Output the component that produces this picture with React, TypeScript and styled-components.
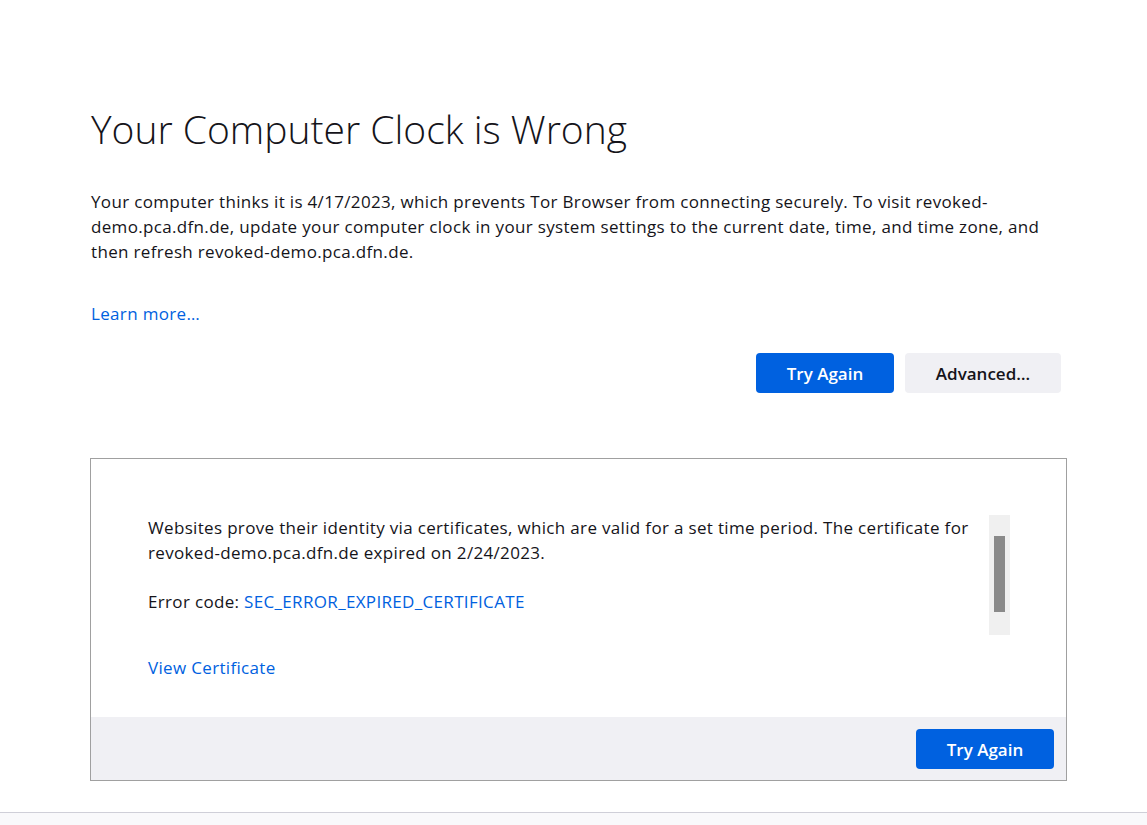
import React, { FC } from 'react';
import styled, { createGlobalStyle } from 'styled-components';

const FONT = '"Open Sans", "Liberation Sans", sans-serif';

const GlobalStyle = createGlobalStyle`
    html, body {
        margin: 0;
        padding: 0;
        background: #ffffff;
    }
    body {
        font-family: ${FONT};
        color: #15141a;
    }
`;

const Page = styled.div`
    height: 825px;
    display: flex;
    flex-direction: column;
    overflow: hidden;
`;

const Main = styled.main`
    flex: 1;
    padding: 104px 0 0 90px;
`;

const Container = styled.div`
    width: 977px;
    display: flex;
    flex-direction: column;
`;

const Intro = styled.div`
    padding: 0 7px 0 1px;
`;

const Title = styled.h1`
    margin: 0;
    font-size: 39px;
    font-weight: 300;
    line-height: 50px;
`;

const Text = styled.p`
    margin: 0;
    font-size: 17px;
    line-height: 25px;
    letter-spacing: 0.33px;
`;

const Lead = styled(Text)`
    margin-top: 35px;
`;

const Link = styled.a`
    color: #0061e0;
    text-decoration: none;
    font-size: 17px;
    line-height: 25px;
    letter-spacing: 0.33px;
`;

const LearnMore = styled.div`
    margin-top: 37px;
`;

const ButtonRow = styled.div<{ $pad?: string }>`
    display: flex;
    justify-content: flex-end;
    gap: 11px;
    padding: ${(p) => p.$pad || '0'};
`;

const Button = styled.button<{ $primary?: boolean; $width: number }>`
    width: ${(p) => p.$width}px;
    height: 40px;
    border: none;
    border-radius: 4px;
    font-family: ${FONT};
    font-size: 17px;
    font-weight: 600;
    background: ${(p) => (p.$primary ? '#0061e0' : '#f0f0f4')};
    color: ${(p) => (p.$primary ? '#ffffff' : '#15141a')};
    cursor: pointer;
`;

const Details = styled.section`
    margin-top: 65px;
    border: 1px solid #a0a0a0;
    display: flex;
    flex-direction: column;
`;

const DetailsBody = styled.div`
    padding: 56px 56px 37px 57px;
`;

const ScrollArea = styled.div`
    height: 120px;
    display: flex;
    gap: 12px;
`;

const ScrollContent = styled.div`
    flex: 1;
`;

const ScrollTrack = styled.div`
    width: 21px;
    background: #f0f0f0;
    display: flex;
    justify-content: center;
    padding-top: 21px;
    box-sizing: border-box;
`;

const ScrollThumb = styled.div`
    width: 11px;
    height: 76px;
    background: #8a8a8a;
`;

const ErrorCode = styled(Text)`
    margin-top: 24px;
`;

const ViewCert = styled.div`
    margin-top: 20px;
`;

const DetailsFooter = styled.div`
    background: #f0f0f4;
    padding: 12px 12px 11px;
`;

const BottomBar = styled.div`
    height: 12px;
    border-top: 1px solid #cfcfd8;
    background: #f9f9fb;
`;

const App: FC = () => {
    return (
        <Page>
            <GlobalStyle />
            <Main>
                <Container>
                    <Intro>
                        <Title>Your Computer Clock is Wrong</Title>
                        <Lead>
                            Your computer thinks it is 4/17/2023, which prevents Tor Browser from connecting
                            securely. To visit revoked-demo.pca.dfn.de, update your computer clock in your system
                            settings to the current date, time, and time zone, and then refresh
                            revoked-demo.pca.dfn.de.
                        </Lead>
                        <LearnMore>
                            <Link href="#learn">Learn more…</Link>
                        </LearnMore>
                    </Intro>
                    <ButtonRow $pad="27px 6px 0 0">
                        <Button $primary $width={138}>
                            Try Again
                        </Button>
                        <Button $width={156}>Advanced…</Button>
                    </ButtonRow>
                    <Details>
                        <DetailsBody>
                            <ScrollArea>
                                <ScrollContent>
                                    <Text>
                                        Websites prove their identity via certificates, which are valid for a set
                                        time period. The certificate for revoked-demo.pca.dfn.de expired on
                                        2/24/2023.
                                    </Text>
                                    <ErrorCode>
                                        Error code: <Link href="#code">SEC_ERROR_EXPIRED_CERTIFICATE</Link>
                                    </ErrorCode>
                                </ScrollContent>
                                <ScrollTrack>
                                    <ScrollThumb />
                                </ScrollTrack>
                            </ScrollArea>
                            <ViewCert>
                                <Link href="#cert">View Certificate</Link>
                            </ViewCert>
                        </DetailsBody>
                        <DetailsFooter>
                            <ButtonRow>
                                <Button $primary $width={138}>
                                    Try Again
                                </Button>
                            </ButtonRow>
                        </DetailsFooter>
                    </Details>
                </Container>
            </Main>
            <BottomBar />
        </Page>
    );
};

export default App;
